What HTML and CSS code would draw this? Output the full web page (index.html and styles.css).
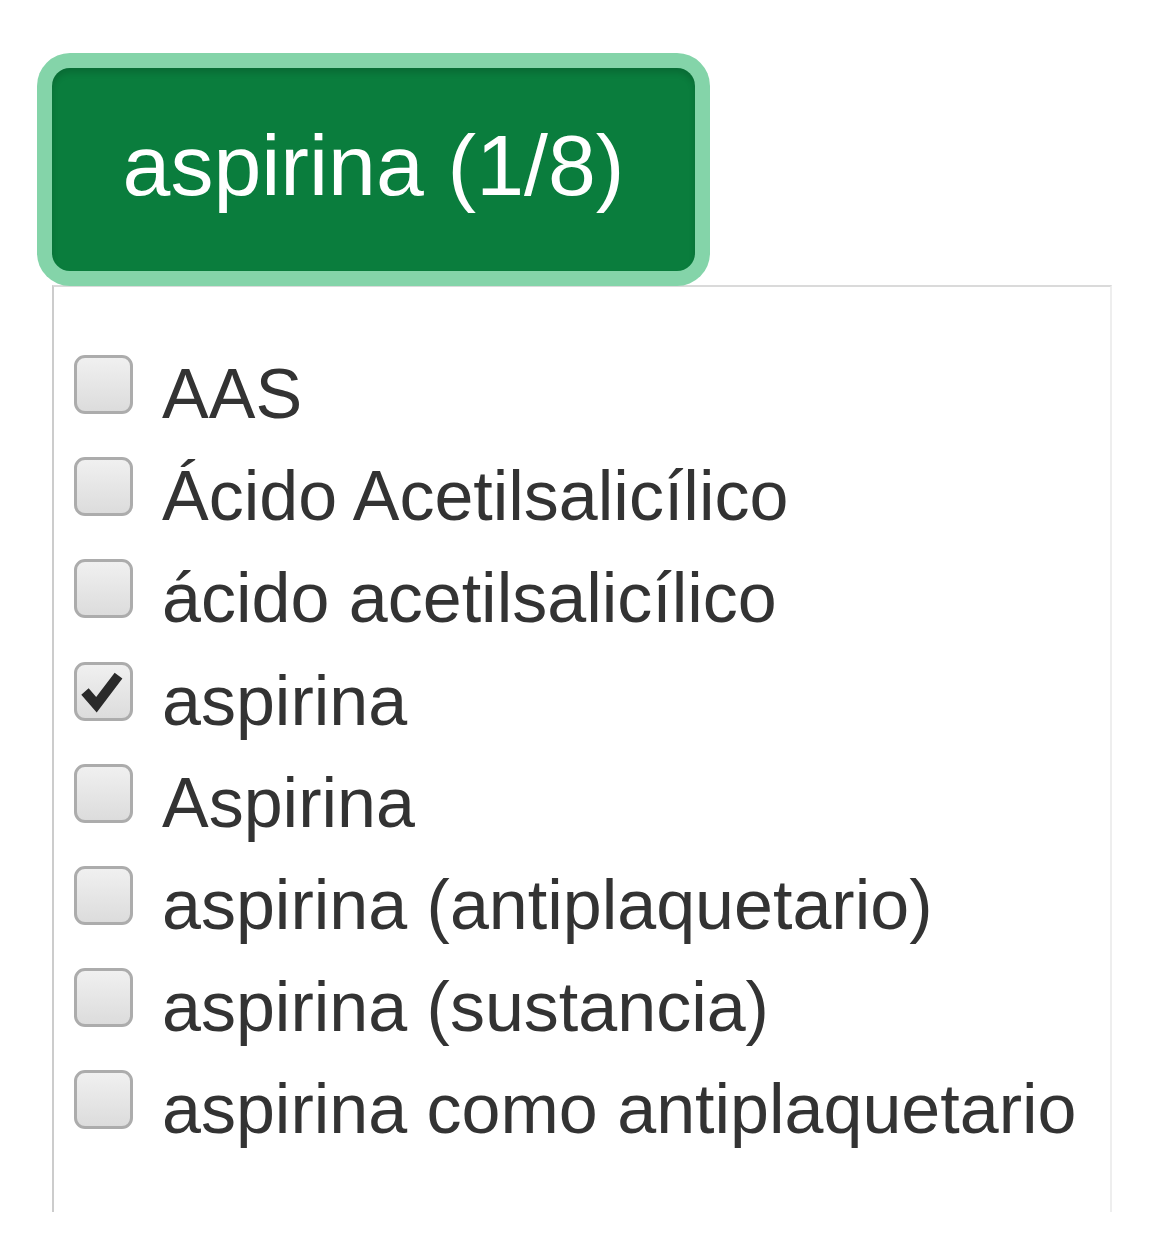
FILE: index.html
```html
<!DOCTYPE html>
<html lang="es">
<head>
<meta charset="utf-8">
<title>aspirina</title>
<link rel="stylesheet" href="styles.css">
</head>
<body>
<div class="dropdown">
  <button class="btn" type="button">aspirina (1/8)</button>
  <ul class="menu">
    <li class="item"><span class="cb"></span><span class="label">AAS</span></li>
    <li class="item"><span class="cb"></span><span class="label">Ácido Acetilsalicílico</span></li>
    <li class="item"><span class="cb"></span><span class="label">ácido acetilsalicílico</span></li>
    <li class="item"><span class="cb checked"><svg viewBox="0 0 60 60" width="100%" height="100%"><polyline points="9,30 22,45 47,12" fill="none" stroke="#2a2a2a" stroke-width="11" stroke-linecap="butt" stroke-linejoin="miter"/></svg></span><span class="label">aspirina</span></li>
    <li class="item"><span class="cb"></span><span class="label">Aspirina</span></li>
    <li class="item"><span class="cb"></span><span class="label">aspirina (antiplaquetario)</span></li>
    <li class="item"><span class="cb"></span><span class="label">aspirina (sustancia)</span></li>
    <li class="item"><span class="cb"></span><span class="label">aspirina como antiplaquetario</span></li>
  </ul>
</div>
</body>
</html>
```

FILE: styles.css
```css
html, body {
  margin: 0;
  padding: 0;
  background: #ffffff;
}

body {
  font-family: "Liberation Sans", Arial, sans-serif;
}

.dropdown {
  padding-top: 68px;
  padding-left: 52px;
}

.btn {
  display: flex;
  align-items: center;
  justify-content: center;
  width: 643px;
  height: 203px;
  padding: 0 0 10px 0;
  margin: 0;
  border: none;
  border-radius: 18px;
  background: #0a7d3d;
  color: #ffffff;
  font-family: "Liberation Sans", Arial, sans-serif;
  font-size: 86px;
  line-height: 1;
  box-shadow: inset 0 5px 6px rgba(0, 0, 0, 0.14), 0 0 0 15px #84d4a9;
  position: relative;
  z-index: 1;
}

.menu {
  list-style: none;
  margin: 14px 0 0 0;
  padding: 56px 0 51px 20px;
  box-sizing: border-box;
  width: 1060px;
  border-top: 2px solid #dadada;
  border-left: 2px solid #cccccc;
  border-right: 2px solid #eeeeee;
  border-bottom: none;
  background: #ffffff;
}

.item {
  display: flex;
  align-items: flex-start;
  height: 102.2px;
  font-size: 70px;
  line-height: 102.2px;
  color: #333333;
}

.cb {
  flex: 0 0 auto;
  box-sizing: border-box;
  width: 59px;
  height: 59px;
  margin-top: 12px;
  margin-right: 29px;
  border: 3px solid #acacac;
  border-radius: 11px;
  background: linear-gradient(#f0f0f0, #dcdcdc);
  display: flex;
}

.label {
  white-space: nowrap;
}
```
